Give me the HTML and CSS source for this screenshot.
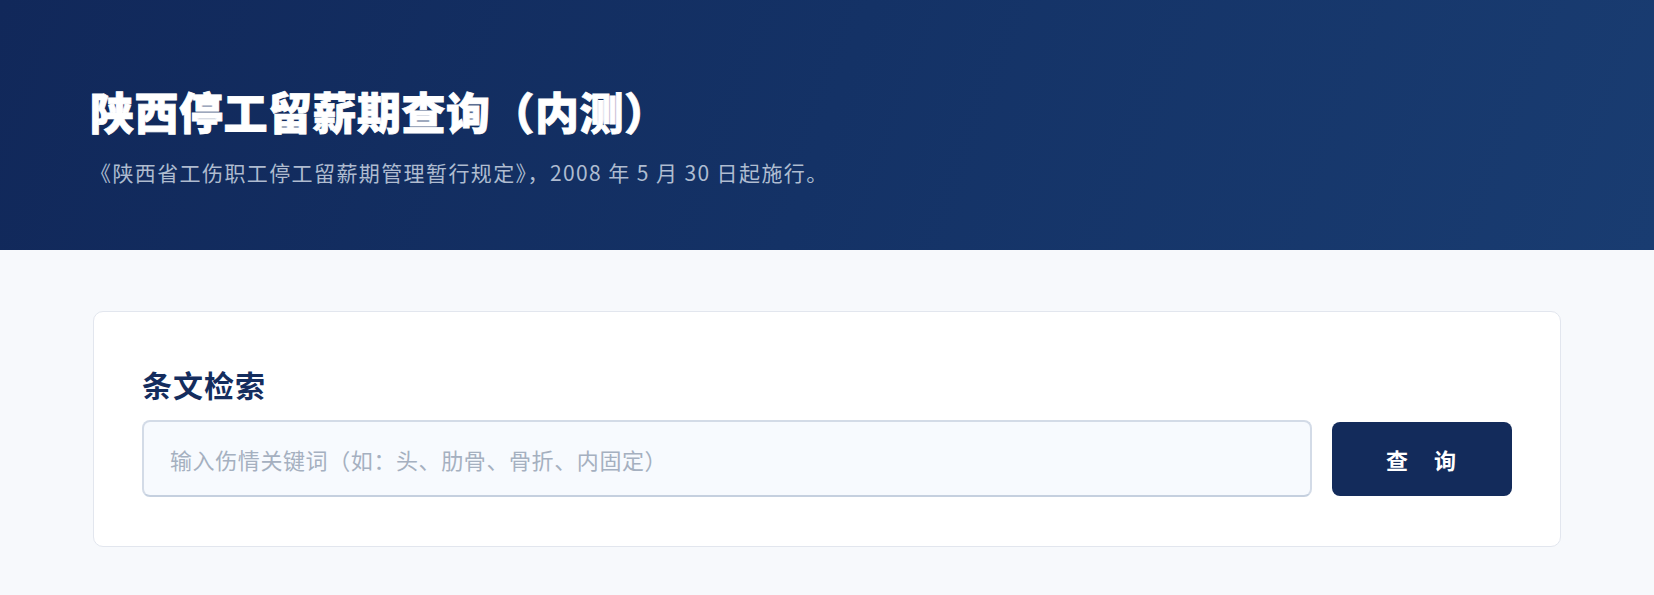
FILE: index.html
```html
<!DOCTYPE html>
<html lang="zh-CN">
<head>
<meta charset="utf-8">
<title>陕西停工留薪期查询（内测）</title>
<link rel="stylesheet" href="styles.css">
</head>
<body>
<header class="hero">
  <h1 class="hero-title">陕西停工留薪期查询（内测）</h1>
  <p class="hero-sub">《陕西省工伤职工停工留薪期管理暂行规定》，2008 年 5 月 30 日起施行。</p>
</header>
<main class="main">
  <section class="card">
    <h2 class="card-title">条文检索</h2>
    <div class="search-row">
      <input class="search-input" type="text" placeholder="输入伤情关键词（如：头、肋骨、骨折、内固定）">
      <button class="search-btn" type="button">查　询</button>
    </div>
  </section>
</main>
</body>
</html>
```
FILE: styles.css
```css
* { box-sizing: border-box; }
html, body { margin: 0; padding: 0; }
body {
  background: #f7f9fc;
  font-family: "Noto Sans CJK SC", "Noto Sans", sans-serif;
  min-height: 595px;
}
.hero {
  height: 250px;
  padding: 82px 90px 0;
  background: linear-gradient(110deg, #11285a 0%, #143266 50%, #193c71 100%);
}
.hero-title {
  margin: 0;
  color: #ffffff;
  font-size: 44px;
  font-weight: 900;
  line-height: 58px;
  letter-spacing: 0.5px;
  -webkit-text-stroke: 0.8px #ffffff;
}
.hero-sub {
  margin: 18px 0 0;
  color: rgba(220, 228, 240, 0.78);
  font-size: 21px;
  line-height: 28px;
  letter-spacing: 1.4px;
}
.main {
  padding: 61px 93px 48px;
}
.card {
  background: #ffffff;
  border: 1px solid #e2e6ee;
  border-radius: 10px;
  padding: 52px 48px 49px;
}
.card-title {
  margin: 0 0 16px;
  color: #142d5e;
  font-size: 30px;
  font-weight: 700;
  line-height: 40px;
  letter-spacing: 1px;
}
.search-row {
  display: flex;
  align-items: center;
  gap: 20px;
}
.search-input {
  flex: 1;
  height: 77px;
  border: 2px solid #d3dbe7;
  border-bottom-color: #c5d0df;
  border-radius: 8px;
  background: #f7fafe;
  padding: 0 26px;
  font-family: inherit;
  font-size: 22px;
  letter-spacing: 0.6px;
  color: #334155;
  outline: none;
}
.search-input::placeholder {
  color: #a5b0c0;
}
.search-btn {
  width: 180px;
  height: 74px;
  border: none;
  border-radius: 8px;
  background: #132b5b;
  color: #ffffff;
  font-family: inherit;
  font-size: 22px;
  font-weight: 700;
  letter-spacing: 2px;
  cursor: pointer;
}
```
